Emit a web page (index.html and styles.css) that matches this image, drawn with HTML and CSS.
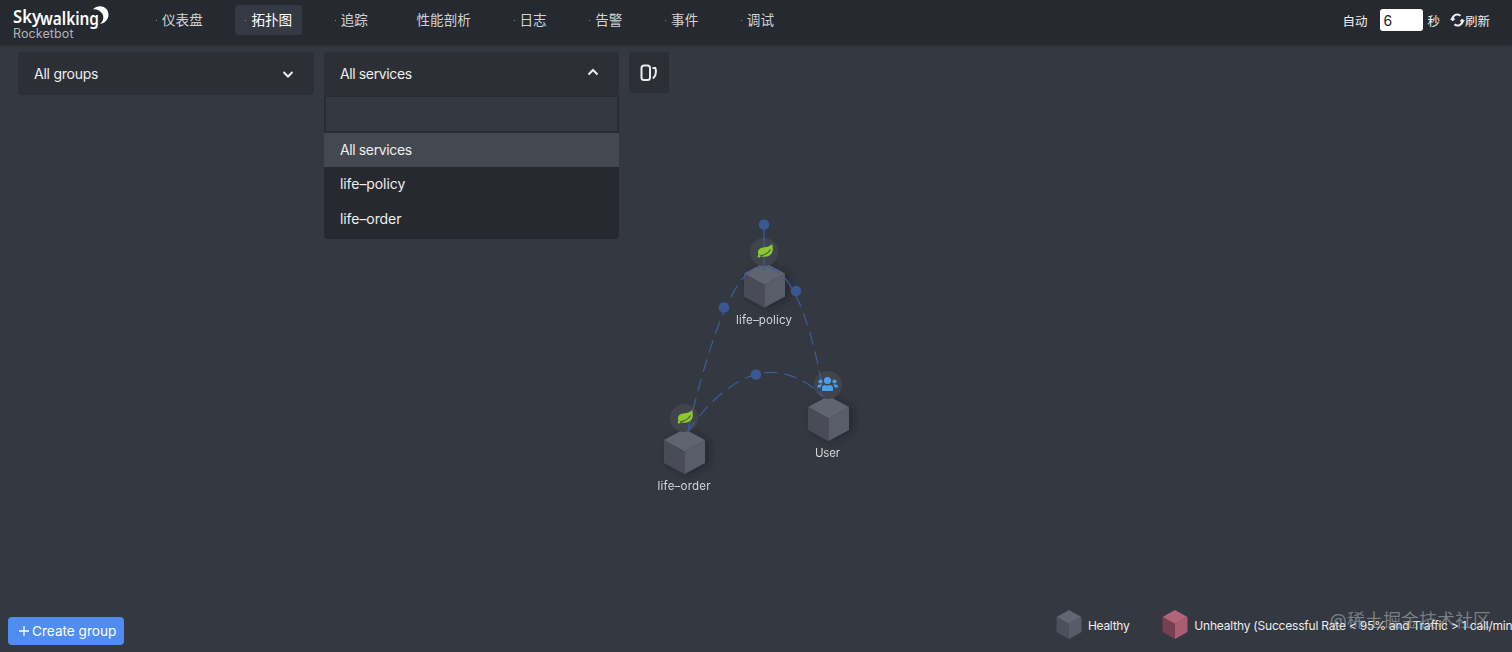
FILE: index.html
```
<!DOCTYPE html>
<html lang="zh-CN">
<head>
    <meta charset="UTF-8">
    <meta name="viewport" content="width=device-width, initial-scale=1.0">
    <title>SkyWalking Rocketbot</title>
    <link rel="stylesheet" href="styles.css">
</head>
<body>
    <header class="header">
        <div class="brand">
            <svg class="logo" width="100" height="24" viewBox="0 0 100 24">
                <text x="0" y="18" textLength="28" lengthAdjust="spacingAndGlyphs">Sky</text>
                <text x="27" y="19.500" textLength="59" lengthAdjust="spacingAndGlyphs">walking</text>
                <path d="M80 4.200C85-1.500 95.500 1 95.500 9.500c0 5-3.500 8.700-8.500 9.500 3.400-3 4.200-6.800 2.300-10.200C87.600 5.700 84.400 4 80 4.200z"/>
            </svg>
            <div class="brand-sub">Rocketbot</div>
        </div>
        <nav class="nav">
            <a class="nav-item">仪表盘</a>
            <a class="nav-item active">拓扑图</a>
            <a class="nav-item">追踪</a>
            <a class="nav-item plain">性能剖析</a>
            <a class="nav-item">日志</a>
            <a class="nav-item">告警</a>
            <a class="nav-item">事件</a>
            <a class="nav-item">调试</a>
        </nav>
        <div class="reload">
            <span>自动</span>
            <input class="reload-input" type="text" value="6">
            <span class="unit">秒</span>
            <svg width="15" height="14" viewBox="0 0 15 14" fill="none" stroke="#eee" stroke-width="2">
                <path d="M2.700 8V6.500A4.600 4.600 0 0 1 10.500 2.800M12.300 6v1.500A4.600 4.600 0 0 1 4.500 11.200"/>
                <path d="M0 7.200h5.400L2.700 10.800zM9.600 6.800H15L12.300 3.200z" fill="#eee" stroke="none" transform="matrix(1 0 0 -1 0 14)"/>
            </svg>
            <span>刷新</span>
        </div>
    </header>

    <main class="topology">
        <div class="toolbar">
            <div class="select group-select">
                <span>All groups</span>
                <svg width="12" height="8" viewBox="0 0 12 8"><path d="M1.500 2 6 6.500l4.500-4.500"/></svg>
            </div>
            <div class="select service-select">
                <span>All services</span>
                <svg class="up" width="12" height="8" viewBox="0 0 12 8"><path d="M1.500 6.500 6 2l4.500 4.500"/></svg>
                <div class="dropdown">
                    <input class="search" type="text">
                    <div class="option selected">All services</div>
                    <div class="option name">life–policy</div>
                    <div class="option name">life–order</div>
                </div>
            </div>
            <button class="detail-btn">
                <svg width="18" height="18" viewBox="0 0 18 18" fill="none" stroke="#e8eaed" stroke-width="2">
                    <rect x="1.500" y="1.500" width="8.500" height="14.500" rx="2.500"/>
                    <path d="M12.500 4h2.800c1.200 3.500.6 7.500-2.300 10.500"/>
                </svg>
            </button>
        </div>

        <svg class="graph" width="1512" height="607" viewBox="0 45 1512 607">
            <defs>
                <filter id="shadow" x="-50%" y="-50%" width="200%" height="200%">
                    <feDropShadow dx="4" dy="1" stdDeviation="3" flood-color="#202329" flood-opacity=".6"/>
                </filter>
                <g id="cube">
                    <path d="M0 0 20.500 11 0 22.500-20.500 11z" fill="#5f6570"/>
                    <path d="M-20.500 11 0 22.500V45L-20.500 34z" fill="#484c57"/>
                    <path d="M20.500 11 0 22.500V45L20.500 34z" fill="#585d69"/>
                </g>
                <g id="leaf">
                    <path d="M7-7C9-1 8 5.700-1 5.700c-2.500 0-3.500-.8-4.600-.3C-8 2-7.500-2-3-3.200 1-4.200 4.500-4 7-7z" fill="#8bc832"/>
                    <path d="M-6 5C-1 4.500 3.500 2 5.500-1.500" fill="none" stroke="#46543c" stroke-width="1.100"/>
                    <circle cx="-6" cy="5.200" r="1.300" fill="#8bc832"/>
                </g>
            </defs>

            <g class="cubes" filter="url(#shadow)">
                <use href="#cube" x="764.500" y="262.500"/>
                <use href="#cube" x="684.500" y="429"/>
                <use href="#cube" x="828.500" y="396"/>
            </g>
            <g class="badges">
                <circle cx="764" cy="252" r="14"/>
                <circle cx="684" cy="418" r="14"/>
                <circle cx="828" cy="385" r="14"/>
            </g>

            <g class="links">
                <path class="solid" d="M764 225V270"/>
                <path d="M688 430Q727 267 761 267"/>
                <path d="M822 384Q799 267 765 267"/>
                <path d="M687 432Q757 335 823 396"/>
            </g>
            <g class="dots">
                <circle cx="764" cy="224.500" r="5.300"/>
                <circle cx="724" cy="307.500" r="5.300"/>
                <circle cx="796" cy="291" r="5.300"/>
                <circle cx="756" cy="374.500" r="5.300"/>
            </g>

            <use href="#leaf" x="765" y="251"/>
            <use href="#leaf" x="685" y="417"/>
            <g class="users">
                <circle cx="827.500" cy="380.500" r="3.600"/>
                <circle cx="820.500" cy="381.500" r="2.100"/>
                <circle cx="834.500" cy="381.500" r="2.100"/>
                <path d="M822 391v-2.500q0-3.500 3-3.500 2.500 1 5 0 3 0 3 3.500v2.500zM817.500 387.500v-1q0-2 2-2h3q-1.500 1-1.900 3zM838 387.500v-1q0-2-2-2h-3.200q1.500 1 1.900 3z"/>
            </g>

            <g class="labels">
                <text x="764" y="323.500" textLength="56">life–policy</text>
                <text x="684" y="489.500" textLength="53">life–order</text>
                <text x="827.500" y="456.500" textLength="25">User</text>
            </g>
        </svg>

        <footer class="bottom">
            <button class="create-btn"><svg width="10" height="10" viewBox="0 0 10 10"><path d="M5 0v10M0 5h10" stroke="#fff" stroke-width="1.300"/></svg><span>Create group</span></button>
            <div class="legend">
                <svg width="26" height="29" viewBox="0 0 26 29">
                    <path d="M13 0 25.500 7 13 14 .5 7z" fill="#606773"/>
                    <path d="M.5 7 13 14v15L.5 22z" fill="#4b505c"/>
                    <path d="M25.500 7 13 14v15l12.500-7z" fill="#565c68"/>
                </svg>
                <span class="healthy">Healthy</span>
                <svg width="26" height="29" viewBox="0 0 26 29">
                    <path d="M13 0 25.500 7 13 14 .5 7z" fill="#b26478"/>
                    <path d="M.5 7 13 14v15L.5 22z" fill="#783f52"/>
                    <path d="M25.500 7 13 14v15l12.500-7z" fill="#a85d73"/>
                </svg>
                <span class="unhealthy">Unhealthy (Successful Rate &lt; 95% and Traffic &gt; 1 call/min)</span>
            </div>
        </footer>
        <div class="watermark">@稀土掘金技术社区</div>
    </main>
</body>
</html>
```
FILE: styles.css
```
* {
    box-sizing: border-box;
}
body {
    margin: 0;
    height: 652px;
    overflow: hidden;
    background: #343840;
    color: #eee;
    font-family: Inter, "Noto Sans CJK SC", sans-serif;
    font-size: 14px;
}
button, input {
    font-family: inherit;
    border: none;
    outline: none;
}
.header {
    height: 45px;
    display: flex;
    align-items: flex-start;
    background: #262a30;
    box-shadow: 0 1px 2px #2b2f35;
}
.brand {
    width: 146px;
    padding: 5px 0 0 13px;
}
.logo {
    display: block;
    font-family: "Noto Sans", sans-serif;
    font-size: 17px;
    font-weight: 600;
    fill: #fff;
}
.brand-sub {
    margin-top: -4px;
    color: #b0b3b8;
    font-size: 12.5px;
    line-height: 17px;
    letter-spacing: 0.1px;
}
.nav {
    display: flex;
    gap: 22.6px;
    padding-top: 5px;
}
.nav-item {
    position: relative;
    height: 30px;
    padding: 0 10px 0 16px;
    border-radius: 4px;
    font-size: 13.6px;
    line-height: 31px;
    color: #d0d3d7;
}
.nav-item::before {
    content: "";
    position: absolute;
    left: 10px;
    top: 15px;
    width: 1px;
    height: 1px;
    background: #85888d;
}
.nav-item.plain::before {
    display: none;
}
.nav-item.active {
    background: #343943;
    color: #fff;
}
.reload {
    display: flex;
    align-items: center;
    height: 40px;
    margin-left: auto;
    padding-right: 22px;
    font-size: 12.5px;
}
.reload-input {
    width: 43px;
    height: 22px;
    margin: 0 4px 0 13px;
    padding: 0 3px;
    border-radius: 3px;
    background: #fff;
    color: #222;
    font-size: 14px;
}
.unit {
    margin-right: 10px;
}
.topology {
    position: relative;
    height: 607px;
    display: flex;
    flex-direction: column;
    justify-content: space-between;
}
.toolbar {
    position: relative;
    z-index: 2;
    display: flex;
    align-items: flex-start;
    padding: 7px 0 0 18px;
}
.select {
    position: relative;
    display: flex;
    align-items: center;
    justify-content: space-between;
    height: 43px;
    padding: 0 20px 0 16px;
    border-radius: 4px;
    background: #2c3036;
    letter-spacing: -0.38px;
}
.select svg {
    fill: none;
    stroke: #eee;
    stroke-width: 2;
}
.select svg.up {
    margin-top: -4px;
}
.group-select {
    width: 296px;
    margin-right: 10px;
}
.group-select span {
    letter-spacing: -0.25px;
}
.service-select {
    width: 295px;
    margin-right: 10px;
}
.dropdown {
    position: absolute;
    top: 43px;
    left: 0;
    width: 295px;
    height: 144px;
    border-radius: 0 0 4px 4px;
    background: #262a30;
    overflow: hidden;
}
.search {
    display: block;
    width: 100%;
    height: 37.5px;
    border: 2px solid #292d33;
    background: #343840;
}
.option {
    height: 34.5px;
    padding-left: 16px;
    line-height: 34.5px;
}
.option.name {
    letter-spacing: -0.08px;
}
.option.selected {
    line-height: 33px;
    background: #444850;
}
.detail-btn {
    display: flex;
    align-items: center;
    justify-content: center;
    width: 40px;
    height: 41px;
    padding: 0;
    border-radius: 3px;
    background: #2c3036;
}
.graph {
    position: absolute;
    left: 0;
    top: 0;
}
.badges {
    fill: #40444c;
}
.links {
    fill: none;
    stroke: #3c5c9e;
    stroke-width: 1.2;
    stroke-dasharray: 13 7;
}
.links .solid {
    stroke-dasharray: none;
}
.dots {
    fill: #385793;
}
.users {
    fill: #4a9fe8;
}
.labels {
    fill: #d3d5d8;
    font-size: 11.5px;
    text-anchor: middle;
}
.bottom {
    position: relative;
    display: flex;
    align-items: flex-start;
    height: 42px;
    padding-left: 8px;
}
.create-btn {
    display: flex;
    align-items: center;
    gap: 3px;
    width: 116px;
    height: 28px;
    margin-top: 7px;
    padding: 0 0 0 11px;
    border-radius: 4px;
    background: #508df3;
    color: #fff;
    font-size: 13.6px;
    white-space: nowrap;
}
.legend {
    display: flex;
    align-items: center;
    width: 456px;
    margin-left: auto;
    overflow: hidden;
    white-space: nowrap;
    font-size: 12px;
    letter-spacing: -0.2px;
}
.legend svg {
    flex: none;
}
.healthy {
    margin: 1px 33px 0 6px;
    letter-spacing: -0.3px;
}
.unhealthy {
    margin: 1px 0 0 6px;
}
.watermark {
    position: absolute;
    right: 21px;
    bottom: 18px;
    color: rgba(190, 194, 200, 0.5);
    font-size: 18px;
    line-height: 26px;
}
```
